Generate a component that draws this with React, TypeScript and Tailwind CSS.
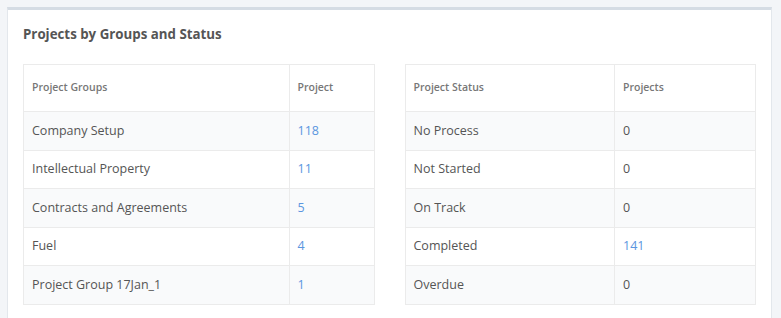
const groups = [
  { name: "Company Setup", count: "118" },
  { name: "Intellectual Property", count: "11" },
  { name: "Contracts and Agreements", count: "5" },
  { name: "Fuel", count: "4" },
  { name: "Project Group 17Jan_1", count: "1" },
];

const statuses = [
  { name: "No Process", count: "0", link: false },
  { name: "Not Started", count: "0", link: false },
  { name: "On Track", count: "0", link: false },
  { name: "Completed", count: "141", link: true },
  { name: "Overdue", count: "0", link: false },
];

export default function App() {
  return (
    <div className="h-[318px] overflow-hidden bg-[#f3f5f8] pl-[7px] pr-[9px] pt-[7px] font-['Open_Sans',sans-serif]">
      <div className="h-[400px] border-x border-[#e3e7ec] border-t-[3px] border-t-[#d5dce4] bg-white px-[15px]">
        <h2 className="pt-[14px] text-[13.3px] font-bold leading-[20px] text-[#555]">
          Projects by Groups and Status
        </h2>

        <div className="mt-[20px] grid grid-cols-2 gap-[30px]">
          {/* Groups */}
          <table className="w-full border-collapse text-[12.5px] text-[#555]">
            <thead>
              <tr className="h-[47px]">
                <th className="border border-[#ebebeb] px-[8px] text-left text-[10.5px] font-semibold text-[#777]">
                  Project Groups
                </th>
                <th className="w-[85px] border border-[#ebebeb] px-[8px] text-left text-[10.5px] font-semibold text-[#777]">
                  Project
                </th>
              </tr>
            </thead>
            <tbody>
              {groups.map((g, i) => (
                <tr key={g.name} className={i % 2 === 0 ? "h-[38.5px] bg-[#f9fafb]" : "h-[38.5px] bg-white"}>
                  <td className="border border-[#ebebeb] px-[8px] pt-px">{g.name}</td>
                  <td className="border border-[#ebebeb] px-[8px] pt-px text-[#5b96e0]">{g.count}</td>
                </tr>
              ))}
            </tbody>
          </table>

          {/* Status */}
          <table className="w-full border-collapse text-[12.5px] text-[#555]">
            <thead>
              <tr className="h-[47px]">
                <th className="border border-[#ebebeb] px-[8px] text-left text-[10.5px] font-semibold text-[#777]">
                  Project Status
                </th>
                <th className="w-[141px] border border-[#ebebeb] px-[8px] text-left text-[10.5px] font-semibold text-[#777]">
                  Projects
                </th>
              </tr>
            </thead>
            <tbody>
              {statuses.map((s, i) => (
                <tr key={s.name} className={i % 2 === 0 ? "h-[38.5px] bg-[#f9fafb]" : "h-[38.5px] bg-white"}>
                  <td className="border border-[#ebebeb] px-[8px] pt-px">{s.name}</td>
                  <td className={s.link ? "border border-[#ebebeb] px-[8px] pt-px text-[#5b96e0]" : "border border-[#ebebeb] px-[8px] pt-px"}>
                    {s.count}
                  </td>
                </tr>
              ))}
            </tbody>
          </table>
        </div>
      </div>
    </div>
  );
}
